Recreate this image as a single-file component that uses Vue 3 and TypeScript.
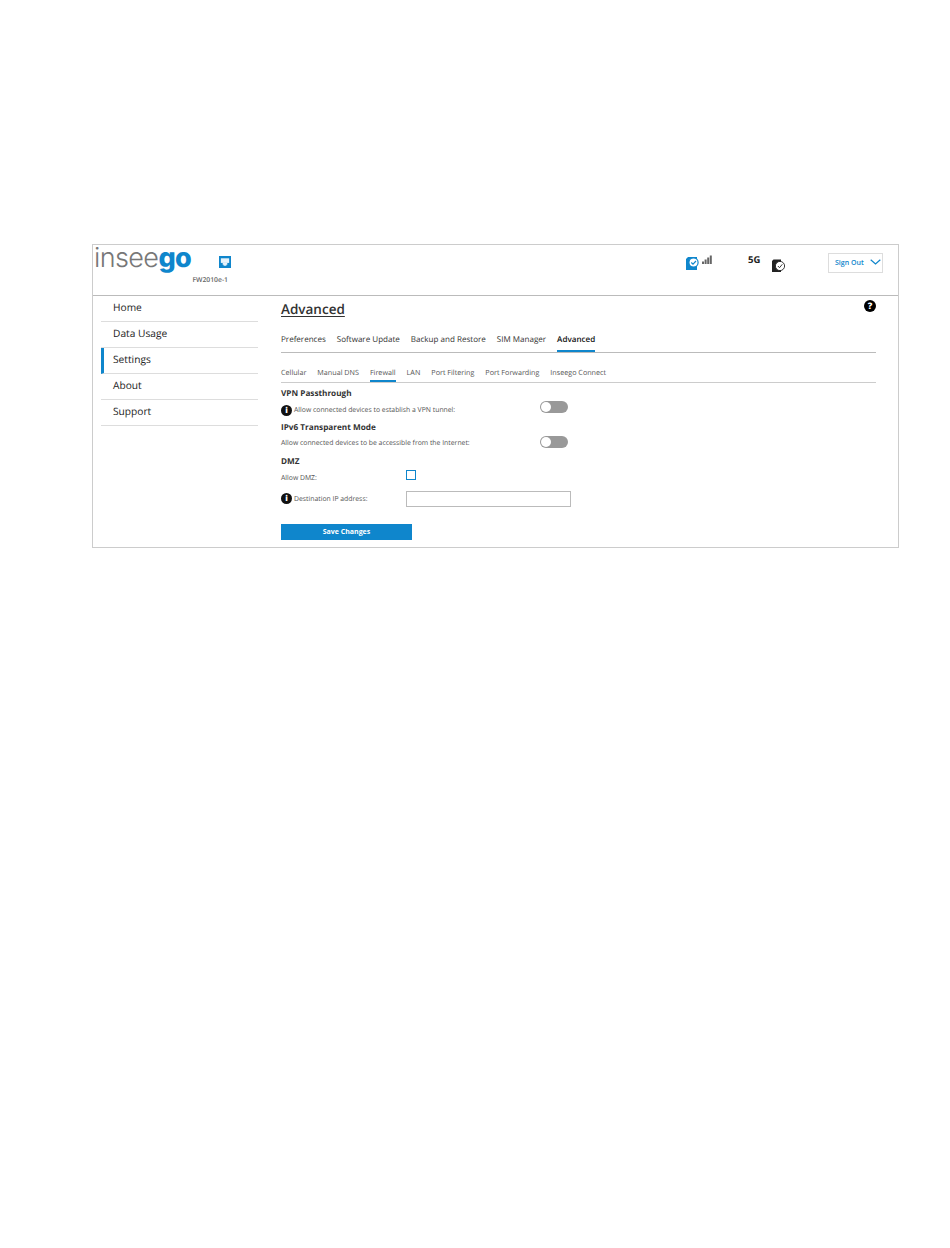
<template>
  <div class="page">
    <div class="frame">
      <header class="top">
        <div class="brand">
          <div class="logo"><span class="logo-a">insee</span><span class="logo-b">go</span></div>
          <div class="model">FW2010e-1</div>
        </div>
        <svg class="eth" width="12" height="12" viewBox="0 0 13 13">
          <rect width="13" height="13" fill="#0f86cc" />
          <rect x="2" y="2.5" width="9" height="5" fill="#e8f3fa" />
          <path d="M4 7.500h5v2H8v1H5v-1H4z" fill="#e8f3fa" />
        </svg>
        <div class="status">
          <svg class="sim" width="26" height="16" viewBox="0 0 26 16">
            <path d="M0 4l2-2h9v13H0z" fill="#0f86cc" />
            <circle cx="7.500" cy="7.500" r="4.600" fill="#fff" stroke="#0f86cc" stroke-width="1.200" />
            <path d="M5.300 7.500l1.700 1.700 3-3.200" fill="none" stroke="#0f86cc" stroke-width="1.200" />
            <path d="M16 6.500h2V9h-2zM18.600 4.500h2V9h-2zM21.200 2.500h2V9h-2zM23.800 .5h2V9h-2z" fill="#666" />
          </svg>
          <span class="net">5G</span>
          <svg class="sim2" width="14" height="14" viewBox="0 0 14 14">
            <path d="M0 2l1.500-1.500H9V13H0z" fill="#222" />
            <circle cx="8" cy="7" r="4.600" fill="#fff" stroke="#222" stroke-width="0.9" />
            <path d="M5.900 7l1.600 1.700 2.800-3.400" fill="none" stroke="#222" stroke-width="0.9" />
          </svg>
          <button type="button" class="signout">
            Sign Out
            <svg width="11" height="6" viewBox="0 0 11 6"><path d="M.7.7l4.800 4.300L10.300.7" fill="none" stroke="#0f86cc" stroke-width="1.200" /></svg>
          </button>
        </div>
      </header>
      <div class="body">
        <nav class="side">
          <a v-for="item in sideItems" :key="item" class="side-item" :class="{ active: item === 'Settings' }">{{ item }}</a>
        </nav>
        <main class="main">
          <div class="title-row">
            <h1>Advanced</h1>
            <span class="help">?</span>
          </div>
          <div class="tabs">
            <span v-for="t in tabs" :key="t" class="tab" :class="{ on: t === 'Advanced' }">{{ t }}</span>
          </div>
          <div class="subtabs">
            <span v-for="t in subTabs" :key="t" class="subtab" :class="{ on: t === 'Firewall' }">{{ t }}</span>
          </div>
          <h2>VPN Passthrough</h2>
          <div class="row vpn">
            <span class="label"><span class="info">i</span>Allow connected devices to establish a VPN tunnel:</span>
            <span class="toggle"></span>
          </div>
          <h2>IPv6 Transparent Mode</h2>
          <div class="row">
            <span class="label">Allow connected devices to be accessible from the Internet:</span>
            <span class="toggle"></span>
          </div>
          <h2>DMZ</h2>
          <div class="form-row dmz">
            <span class="label">Allow DMZ:</span>
            <span class="check"></span>
          </div>
          <div class="form-row ip">
            <span class="label"><span class="info">i</span>Destination IP address:</span>
            <input class="ip-input" type="text" />
          </div>
          <button type="button" class="save">Save Changes</button>
        </main>
      </div>
    </div>
  </div>
</template>

<script setup lang="ts">
const sideItems = ['Home', 'Data Usage', 'Settings', 'About', 'Support']
const tabs = ['Preferences', 'Software Update', 'Backup and Restore', 'SIM Manager', 'Advanced']
const subTabs = ['Cellular', 'Manual DNS', 'Firewall', 'LAN', 'Port Filtering', 'Port Forwarding', 'Inseego Connect']
</script>

<style>
html, body {
  background: #fff;
}
</style>

<style scoped>
.page {
  width: 950px;
  height: 1248px;
  padding: 244px 0 0 92px;
  box-sizing: border-box;
  font-family: "Open Sans", "Liberation Sans", sans-serif;
  color: #333;
  text-rendering: geometricPrecision;
}
.frame {
  width: 807px;
  height: 304px;
  box-sizing: border-box;
  border: 1px solid #ccc;
}
.top {
  height: 50px;
  border-bottom: 1px solid #bbb;
  display: flex;
  position: relative;
}
.brand {
  width: 125px;
  margin-left: 1px;
}
.logo {
  font-family: Inter, "Open Sans", sans-serif;
  font-size: 27px;
  line-height: 30px;
  letter-spacing: -0.6px;
  margin-top: -2px;
  height: 28px;
  white-space: nowrap;
}
.logo-a {
  color: #777;
  font-weight: 300;
}
.logo-b {
  color: #0f86cc;
  font-weight: 800;
}
.model {
  font-size: 6.800px;
  font-weight: 600;
  color: #666;
  text-align: right;
  line-height: 9px;
  margin-top: 4px;
  margin-right: -9px;
}
.eth {
  margin: 11px 0 0 0;
}
.status {
  position: relative;
  flex: 1;
}
.sim {
  position: absolute;
  left: 455px;
  top: 10px;
}
.net {
  position: absolute;
  left: 517px;
  top: 8px;
  font-size: 9.500px;
  line-height: 13px;
  font-weight: 700;
  color: #222;
}
.sim2 {
  position: absolute;
  left: 541px;
  top: 14px;
}
.signout {
  position: absolute;
  right: 15px;
  top: 8px;
  width: 55px;
  height: 20px;
  box-sizing: border-box;
  border: 1px solid #ddd;
  background: #fff;
  padding: 0 0 2px 6px;
  display: flex;
  align-items: center;
  gap: 6px;
  font-family: inherit;
  font-size: 7px;
  font-weight: 600;
  color: #0f86cc;
  white-space: nowrap;
}
.body {
  display: flex;
}
.side {
  width: 157px;
  margin-left: 8px;
  flex: none;
}
.side-item {
  display: block;
  height: 26px;
  box-sizing: border-box;
  border-bottom: 1px solid #ddd;
  padding: 3px 0 0 12px;
  font-size: 10.200px;
  line-height: 16px;
  color: #222;
}
.side-item.active {
  border-left: 3px solid #0f86cc;
  padding-left: 9px;
}
.main {
  width: 595px;
  margin-left: 23px;
}
.title-row {
  display: flex;
  justify-content: space-between;
  height: 32px;
}
h1 {
  margin: 3px 0 0;
  font-size: 13.500px;
  line-height: 20px;
  font-weight: 600;
  color: #333;
  text-decoration: underline;
  text-underline-offset: 2px;
}
.help {
  width: 12px;
  height: 12px;
  border-radius: 50%;
  background: #000;
  color: #fff;
  font-size: 9px;
  line-height: 12px;
  font-weight: 800;
  text-align: center;
  margin: 4px 0 0 0;
}
.tabs {
  display: flex;
  gap: 11px;
  height: 24px;
  border-bottom: 1px solid #bbb;
}
.tab {
  font-size: 8.050px;
  line-height: 24px;
  color: #333;
  height: 24px;
  box-sizing: border-box;
  margin-bottom: -1px;
}
.tab.on {
  color: #111;
  font-weight: 600;
  border-bottom: 2px solid #0f86cc;
}
.subtabs {
  display: flex;
  gap: 11px;
  height: 17px;
  margin-top: 12px;
  border-bottom: 1px solid #ccc;
}
.subtab {
  font-size: 7.200px;
  line-height: 17px;
  color: #555;
  height: 17px;
  box-sizing: border-box;
  margin-bottom: -1px;
}
.subtab.on {
  border-bottom: 2px solid #0f86cc;
}
h2 {
  margin: 4px 0 0;
  font-size: 8.200px;
  line-height: 14px;
  font-weight: 700;
  color: #333;
  height: 12px;
}
.row {
  display: flex;
  align-items: center;
  height: 18px;
}
.row .label {
  width: 259px;
  padding-top: 2px;
}
.row.vpn .label {
  padding-top: 4px;
}
.vpn .toggle {
  margin-bottom: 2px;
}
.label {
  display: flex;
  align-items: center;
  gap: 2px;
  font-size: 6.850px;
  color: #555;
  white-space: nowrap;
}
.info {
  width: 11px;
  height: 11px;
  border-radius: 50%;
  background: #111;
  color: #fff;
  font-size: 8px;
  line-height: 11px;
  font-weight: 800;
  text-align: center;
  flex: none;
}
.toggle {
  width: 28px;
  height: 12px;
  border-radius: 6px;
  background: #999;
  position: relative;
}
.toggle::before {
  content: "";
  position: absolute;
  left: 1px;
  top: 1px;
  width: 10px;
  height: 10px;
  border-radius: 50%;
  background: #fff;
}
.form-row {
  display: flex;
  align-items: center;
}
.form-row .label {
  width: 125px;
  flex: none;
}
.dmz {
  height: 18px;
}
.dmz .label {
  padding-top: 4px;
}
.check {
  width: 8px;
  height: 8px;
  border: 1px solid #0f86cc;
  margin-top: -2px;
}
.ip {
  margin-top: 5px;
  height: 17px;
}
.ip .label {
  padding-top: 2px;
}
.ip .info {
  margin-bottom: 2px;
}
.ip-input {
  width: 165px;
  height: 16px;
  box-sizing: border-box;
  border: 1px solid #bbb;
  padding: 0;
  background: #fff;
}
.save {
  display: block;
  width: 131px;
  height: 16px;
  margin-top: 17px;
  border: 0;
  padding: 0 0 2px;
  background: #0f86cc;
  color: #fff;
  font-family: inherit;
  font-size: 7px;
  font-weight: 700;
}
</style>
